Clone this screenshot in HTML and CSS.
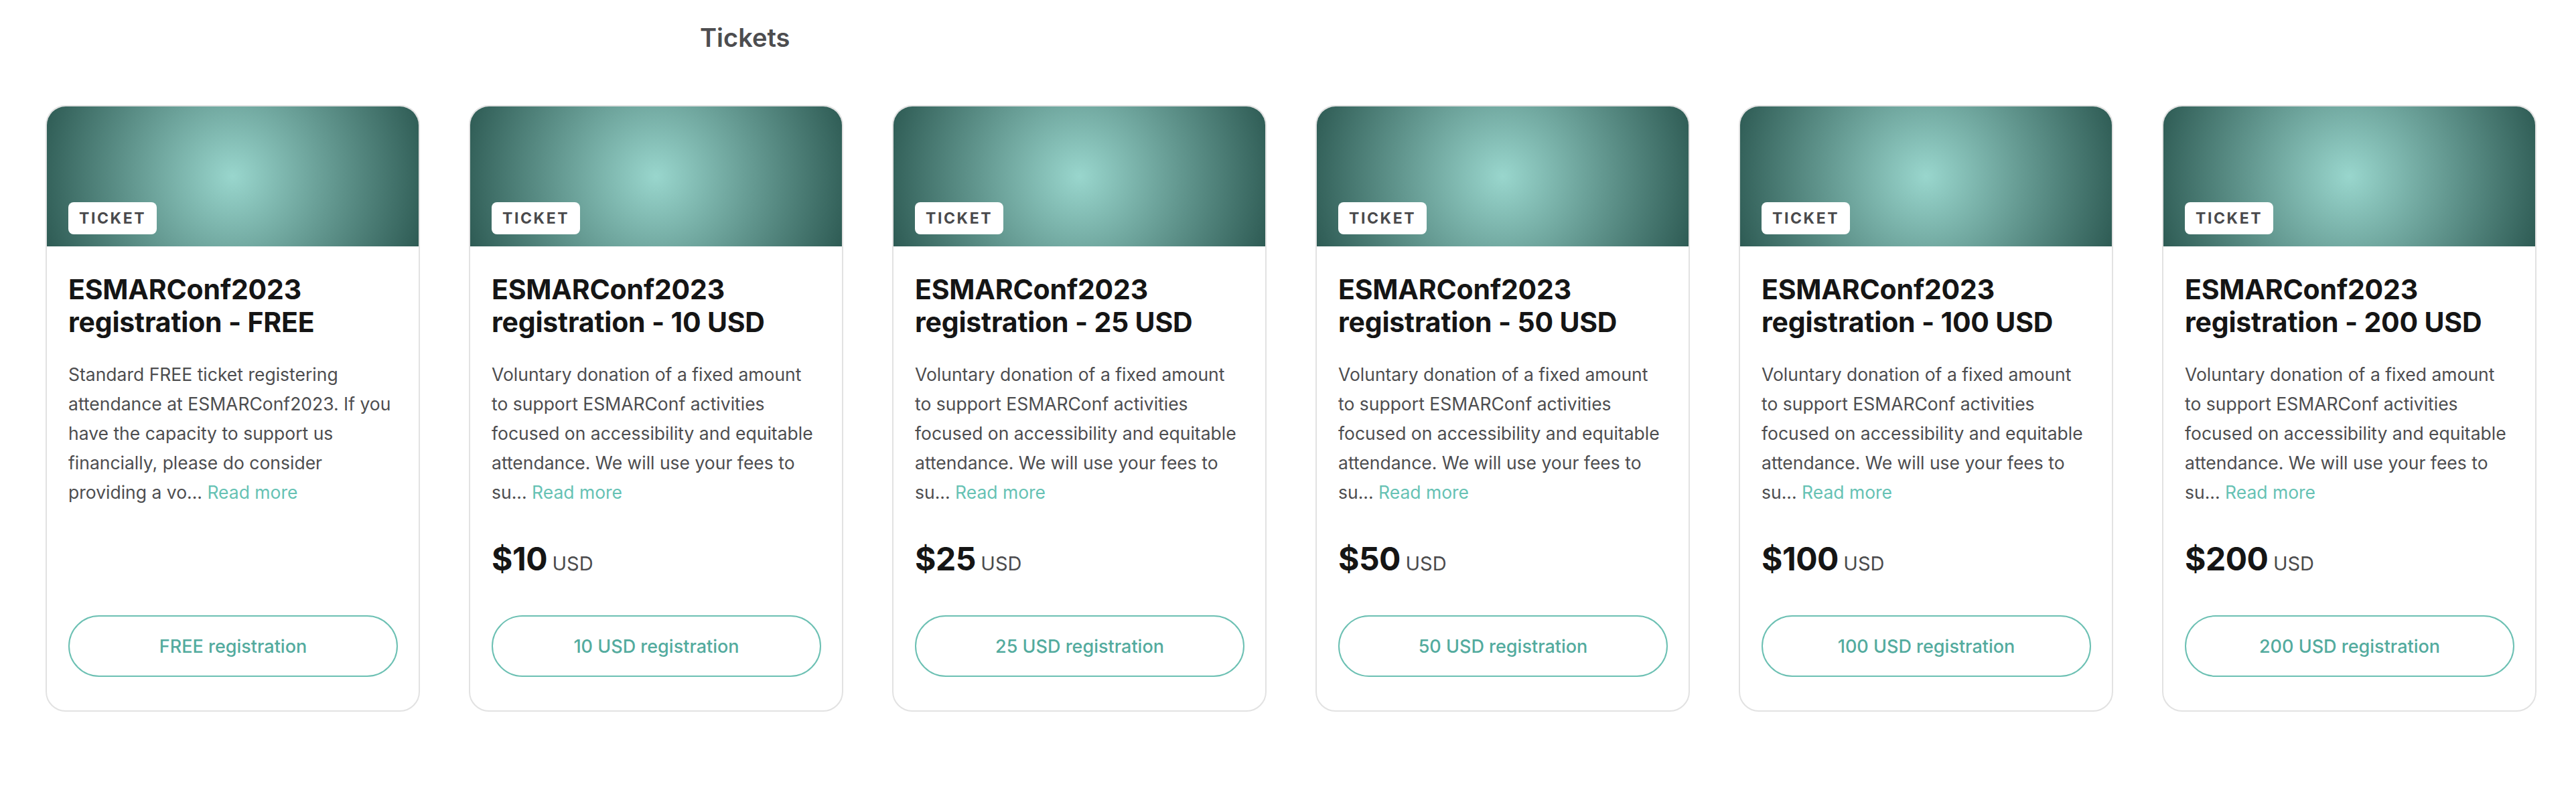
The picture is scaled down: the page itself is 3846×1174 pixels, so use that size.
FILE: index.html
```html
<!DOCTYPE html>
<html lang="en">
<head>
<meta charset="utf-8">
<title>Tickets</title>
<link rel="stylesheet" href="styles.css">
</head>
<body>
<div class="page">
  <h2 class="section-title">Tickets</h2>
  <div class="cards">
    <div class="card">
      <div class="card-hero"><span class="badge">TICKET</span></div>
      <div class="card-body">
        <h3 class="card-title">ESMARConf2023 registration - FREE</h3>
        <p class="card-desc">Standard FREE ticket registering attendance at ESMARConf2023. If you have the capacity to support us financially, please do consider providing a vo... <a class="read-more">Read more</a></p>
        <a class="btn">FREE registration</a>
      </div>
    </div>
    <div class="card">
      <div class="card-hero"><span class="badge">TICKET</span></div>
      <div class="card-body">
        <h3 class="card-title">ESMARConf2023 registration - 10 USD</h3>
        <p class="card-desc">Voluntary donation of a fixed amount to support ESMARConf activities focused on accessibility and equitable attendance. We will use your fees to su... <a class="read-more">Read more</a></p>
        <div class="price"><span class="amount">$10</span> <span class="currency">USD</span></div>
        <a class="btn">10 USD registration</a>
      </div>
    </div>
    <div class="card">
      <div class="card-hero"><span class="badge">TICKET</span></div>
      <div class="card-body">
        <h3 class="card-title">ESMARConf2023 registration - 25 USD</h3>
        <p class="card-desc">Voluntary donation of a fixed amount to support ESMARConf activities focused on accessibility and equitable attendance. We will use your fees to su... <a class="read-more">Read more</a></p>
        <div class="price"><span class="amount">$25</span> <span class="currency">USD</span></div>
        <a class="btn">25 USD registration</a>
      </div>
    </div>
    <div class="card">
      <div class="card-hero"><span class="badge">TICKET</span></div>
      <div class="card-body">
        <h3 class="card-title">ESMARConf2023 registration - 50 USD</h3>
        <p class="card-desc">Voluntary donation of a fixed amount to support ESMARConf activities focused on accessibility and equitable attendance. We will use your fees to su... <a class="read-more">Read more</a></p>
        <div class="price"><span class="amount">$50</span> <span class="currency">USD</span></div>
        <a class="btn">50 USD registration</a>
      </div>
    </div>
    <div class="card">
      <div class="card-hero"><span class="badge">TICKET</span></div>
      <div class="card-body">
        <h3 class="card-title">ESMARConf2023 registration - 100 USD</h3>
        <p class="card-desc">Voluntary donation of a fixed amount to support ESMARConf activities focused on accessibility and equitable attendance. We will use your fees to su... <a class="read-more">Read more</a></p>
        <div class="price"><span class="amount">$100</span> <span class="currency">USD</span></div>
        <a class="btn">100 USD registration</a>
      </div>
    </div>
    <div class="card">
      <div class="card-hero"><span class="badge">TICKET</span></div>
      <div class="card-body">
        <h3 class="card-title">ESMARConf2023 registration - 200 USD</h3>
        <p class="card-desc">Voluntary donation of a fixed amount to support ESMARConf activities focused on accessibility and equitable attendance. We will use your fees to su... <a class="read-more">Read more</a></p>
        <div class="price"><span class="amount">$200</span> <span class="currency">USD</span></div>
        <a class="btn">200 USD registration</a>
      </div>
    </div>
  </div>
</div>
</body>
</html>
```
FILE: styles.css
```css
* { box-sizing: border-box; }
html, body { margin: 0; padding: 0; background: #ffffff; }
body { font-family: Inter, "Noto Sans", "Liberation Sans", sans-serif; color: #161616; }

.page { padding: 0 59px 0 68px; }

.section-title {
  margin: 0;
  padding: 32px 0 0 977px;
  height: 157px;
  font-size: 38px;
  line-height: 48px;
  font-weight: 600;
  color: #4d4d4f;
}

.cards {
  display: grid;
  grid-template-columns: repeat(6, 559px);
  column-gap: 73px;
  align-items: stretch;
}

.card {
  border: 2px solid #e2e2e2;
  border-radius: 30px;
  overflow: hidden;
  display: flex;
  flex-direction: column;
  background: #fff;
}

.card-hero {
  height: 209px;
  background: radial-gradient(circle farthest-corner at 50% 50%, #99d6cd 0%, #2e5b54 100%);
  display: flex;
  align-items: flex-end;
  padding: 0 0 18px 32px;
}

.badge {
  display: inline-block;
  background: #fff;
  color: #4a4a4c;
  border-radius: 8px;
  height: 48px;
  line-height: 48px;
  padding: 0 16px;
  font-size: 23px;
  font-weight: 700;
  letter-spacing: 2.6px;
}

.card-body {
  flex: 1;
  display: flex;
  flex-direction: column;
  padding: 40px 31px 50px 32px;
}

.card-title {
  margin: 0;
  font-size: 41px;
  line-height: 49px;
  font-weight: 700;
  color: #151515;
  letter-spacing: -0.2px;
}

.card-desc {
  margin: 31px 0 0 0;
  font-size: 26.5px;
  line-height: 44px;
  color: #4d4d4f;
}

.read-more { color: #66c2b4; text-decoration: none; }

.price {
  margin-top: 48px;
  line-height: 60px;
  height: 60px;
}

.amount {
  font-size: 48px;
  font-weight: 700;
  color: #151515;
  letter-spacing: -0.5px;
}

.currency {
  font-size: 29px;
  color: #4b4b4d;
  margin-left: 3px;
}

.btn {
  margin-top: auto;
  height: 92px;
  border: 2px solid #6cc0b3;
  border-radius: 46px;
  display: flex;
  align-items: center;
  justify-content: center;
  font-size: 27px;
  font-weight: 500;
  color: #53ab9e;
  text-decoration: none;
}

.price + .btn { margin-top: 54px; }
```
